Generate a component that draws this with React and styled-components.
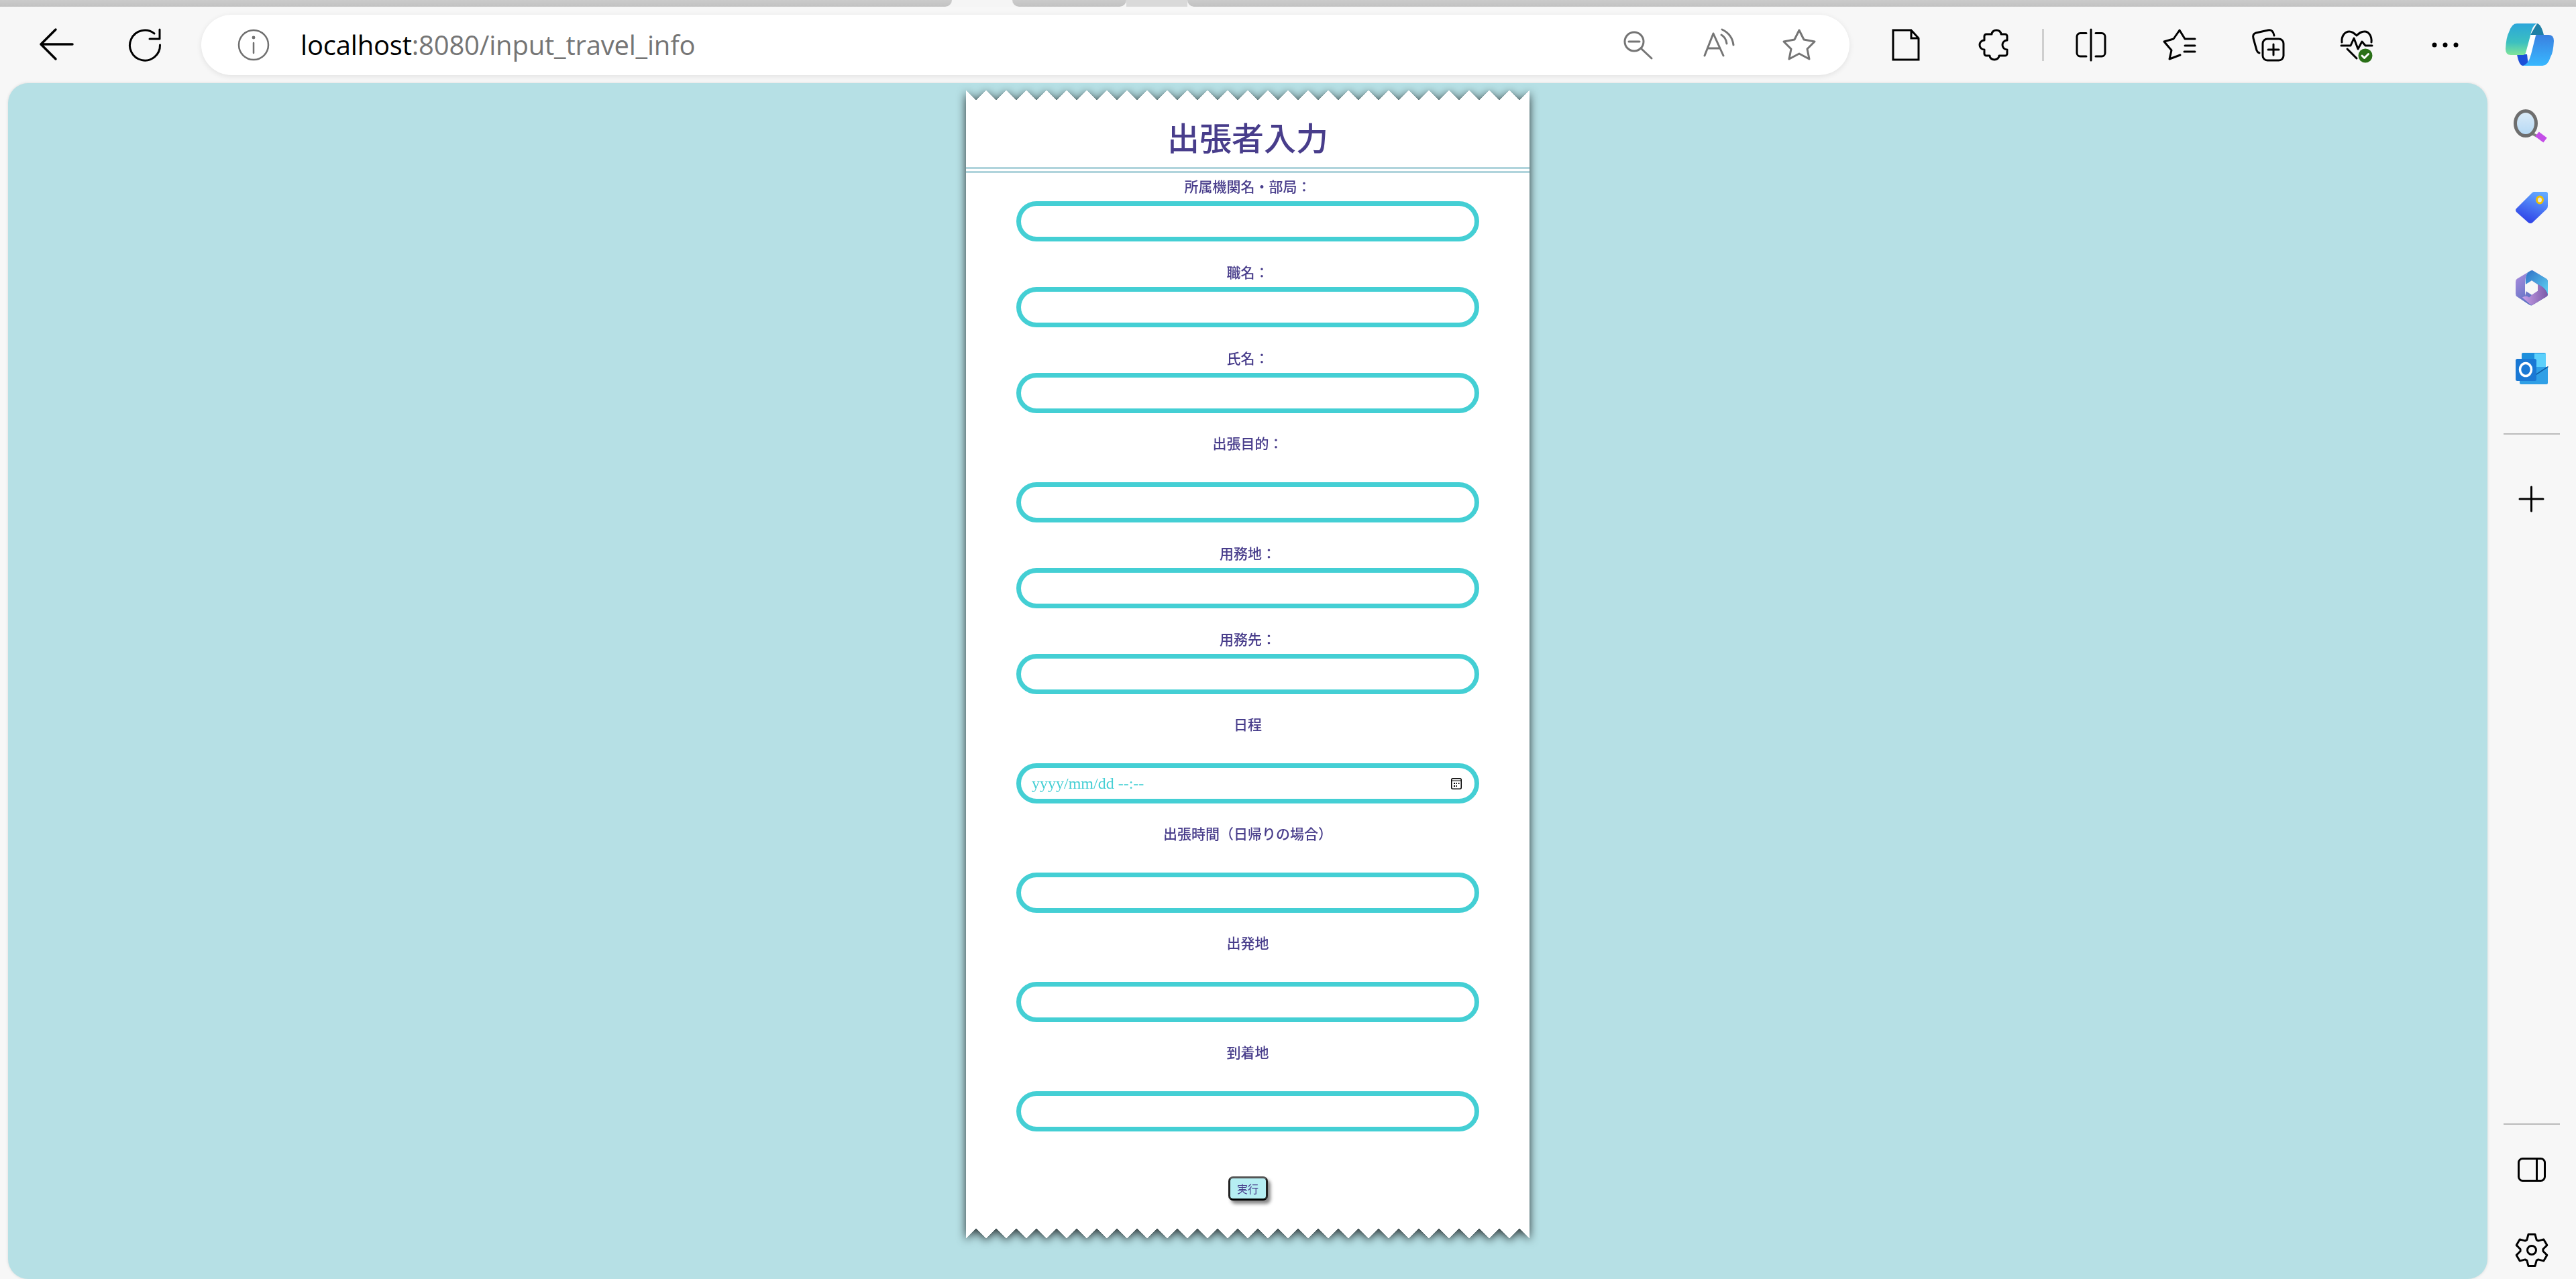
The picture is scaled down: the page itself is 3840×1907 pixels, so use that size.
import React from 'react';
import styled, { createGlobalStyle } from 'styled-components';

const GlobalStyle = createGlobalStyle`
  html, body {
    margin: 0;
    padding: 0;
    background: #f7f7f7;
  }
`;

const Window = styled.div`
  display: flex;
  flex-direction: column;
  width: 3840px;
  height: 1907px;
  overflow: hidden;
  background: #f7f7f7;
`;

// top strip: cropped tabs
const TabStrip = styled.div`
  display: flex;
  flex: none;
  height: 10px;
  background: #f5f5f5;
`;

const TabPiece = styled.div`
  flex: ${props => (props.$w ? `0 0 ${props.$w}px` : '1')};
  margin-right: ${props => props.$mr || 0}px;
  background: ${props => (props.$light ? '#d9d9d9' : 'linear-gradient(#cbcbcb, #c2c2c2)')};
  border-radius: ${props => props.$radius || '0'};
`;

const Toolbar = styled.header`
  display: flex;
  flex: none;
  align-items: center;
  height: 114px;
  padding-left: 18px;
`;

const Slot = styled.div`
  display: flex;
  flex: 0 0 ${props => props.$w || 132}px;
  align-items: center;
  justify-content: center;
`;

const Icon = styled.svg`
  display: block;
  flex: none;
  overflow: visible;
  fill: none;
  stroke: ${props => props.$color || '#000'};
  stroke-width: ${props => props.$sw || 3};
  stroke-linecap: round;
  stroke-linejoin: round;
`;

const AddressBar = styled.div`
  display: flex;
  flex: 0 0 2457px;
  align-items: center;
  height: 90px;
  margin: 0 18px;
  padding: 0 15px 0 54px;
  box-sizing: border-box;
  border-radius: 45px;
  background: #fff;
  box-shadow: 0 2px 8px rgba(0, 0, 0, 0.09);
`;

const Url = styled.div`
  flex: 1;
  margin-left: 46px;
  font-family: 'Open Sans', 'Liberation Sans', sans-serif;
  font-size: 40px;
  line-height: 48px;
  letter-spacing: -0.2px;
  color: #757575;

  b {
    font-weight: 400;
    color: #000;
  }
`;

const ToolDivider = styled.div`
  flex: none;
  width: 3px;
  height: 48px;
  margin: 0 4px 0 5px;
  background: #cfcfcf;
`;

const Body = styled.div`
  display: flex;
  flex: 1;
  min-height: 0;
`;

const Content = styled.main`
  display: flex;
  flex: 0 0 3696px;
  justify-content: center;
  align-items: flex-start;
  margin-left: 12px;
  padding-top: 11px;
  box-sizing: border-box;
  border-radius: 30px;
  overflow: hidden;
  background: #b6e0e5;
  box-shadow: 0 0 4px rgba(0, 0, 0, 0.12);
`;

const Sidebar = styled.aside`
  display: flex;
  flex: 1;
  flex-direction: column;
  align-items: center;
  padding-top: 39px;
`;

const SideSlot = styled.div`
  display: flex;
  flex: none;
  align-items: center;
  justify-content: center;
  width: 48px;
  height: 48px;
  margin-bottom: ${props => props.$mb ?? 72}px;
`;

const SideDivider = styled.div`
  flex: none;
  width: 84px;
  height: 2px;
  background: #bbb;
  margin-bottom: ${props => props.$mb || 72}px;
`;

const Spacer = styled.div`
  flex: 1;
`;

// ticket shaped paper, the shadow follows the teeth
const Paper = styled.div`
  flex: none;
  width: 840px;
  filter: drop-shadow(0 3px 7px rgba(0, 0, 0, 0.78));
`;

const TopTeeth = styled.div`
  height: 14px;
  background: conic-gradient(from -47deg at 50% 100%, transparent 94deg, #fff 0) 0 0 / 30px 14px repeat-x;
`;

const BottomTeeth = styled.div`
  height: 15px;
  background: conic-gradient(from 133deg at 50% 0, transparent 94deg, #fff 0) 0 0 / 30px 15px repeat-x;
`;

const Sheet = styled.div`
  background: #fff;
  padding-bottom: 42px;
`;

const Title = styled.h1`
  margin: 0;
  padding: 30px 0 22px;
  border-bottom: 9px double #b0d4dc;
  font-family: 'Noto Sans CJK JP', sans-serif;
  font-size: 48px;
  line-height: 48px;
  font-weight: 500;
  text-align: center;
  color: #483d8b;
`;

const Form = styled.form`
  display: flex;
  flex-direction: column;
  align-items: center;
`;

const Field = styled.div`
  display: flex;
  flex-direction: column;
  align-items: center;
  width: 690px;
  margin-bottom: 26px;
`;

const Label = styled.label`
  height: ${props => (props.$loose ? 77 : 42)}px;
  font-family: 'Noto Sans CJK JP', sans-serif;
  font-size: 21px;
  font-weight: 500;
  line-height: ${props => (props.$loose ? 37 : 39)}px;
  color: #483d8b;
`;

const InputWrap = styled.div`
  position: relative;
  width: 100%;
`;

const Input = styled.input`
  display: block;
  width: 100%;
  height: 60px;
  padding: 0 14px 0 16px;
  box-sizing: border-box;
  border: 7px solid #44cfd4;
  border-radius: 30px;
  background: #fff;
  outline: none;
  font-family: 'Liberation Serif', serif;
  font-size: 24px;
  color: #44cfd4;

  &::placeholder {
    color: #44cfd4;
    opacity: 1;
  }
`;

const CalendarIcon = styled.svg`
  position: absolute;
  top: 22px;
  right: 26px;
  display: block;
`;

const SubmitButton = styled.button`
  width: 59px;
  height: 36px;
  margin-top: 41px;
  padding: 0;
  box-sizing: border-box;
  border: 3px solid #222;
  border-top-color: #555;
  border-bottom-color: #000;
  border-radius: 7px;
  background: #b6eef2;
  box-shadow: 4px 5px 5px #888;
  font-family: 'Noto Sans CJK JP', sans-serif;
  font-size: 16px;
  line-height: 1;
  color: #483d8b;
`;

const fields = [
  { label: '所属機関名・部局：' },
  { label: '職名：' },
  { label: '氏名：' },
  { label: '出張目的：', loose: true },
  { label: '用務地：' },
  { label: '用務先：' },
  { label: '日程', loose: true, date: true },
  { label: '出張時間（日帰りの場合）', loose: true },
  { label: '出発地', loose: true },
  { label: '到着地', loose: true },
];

// 6 tooth gear outline
const gearPath = Array.from({ length: 6 }, (_, i) => {
  const base = -90 + i * 60;
  return [[-25, 17], [-12, 24], [12, 24], [25, 17]]
    .map(([offset, radius]) => {
      const a = ((base + offset) * Math.PI) / 180;
      return `${(24 + radius * Math.cos(a)).toFixed(1)} ${(24 + radius * Math.sin(a)).toFixed(1)}`;
    })
    .join(' L');
}).join(' L');

const App = () => (
  <Window>
    <GlobalStyle />
    <TabStrip>
      <TabPiece $w={1419} $mr={90} $radius="0 0 16px 0" />
      <TabPiece $w={170} $radius="0 0 16px 16px" />
      <TabPiece $w={91} $light />
      <TabPiece $radius="0 0 0 16px" />
    </TabStrip>

    <Toolbar>
      <Slot>
        <Icon width="48" height="48" viewBox="0 0 48 48" $sw={3.5}>
          <path d="M1 23 L23 1 M1 23 L23 45 M1 23 H48" />
        </Icon>
      </Slot>
      <Slot>
        <Icon width="48" height="48" viewBox="0 0 48 48">
          <path d="M38 7 A22.5 22.5 0 1 0 46.5 24" />
          <path d="M46 1 V15 H31" />
        </Icon>
      </Slot>

      <AddressBar>
        <Icon width="48" height="48" viewBox="0 0 48 48" $color="#707070" $sw={2.5}>
          <circle cx="24" cy="24" r="22" />
          <path d="M24 21 V36" />
          <circle cx="24" cy="13" r="1.2" />
        </Icon>
        <Url>
          <b>localhost</b>:8080/input_travel_info
        </Url>
        <Slot $w={120}>
          <Icon width="48" height="48" viewBox="0 0 48 48" $color="#757575">
            <circle cx="18" cy="19" r="14" />
            <path d="M10 19 H26 M28 29 L44 44" />
          </Icon>
        </Slot>
        <Slot $w={120}>
          <Icon width="48" height="48" viewBox="0 0 48 48" $color="#757575">
            <path d="M3 40 L16 7 L31 40 M8 29 H26" />
            <path d="M28 9 Q35 13 36 22 M29 1 Q44 8 46 24" />
          </Icon>
        </Slot>
        <Slot $w={120}>
          <Icon width="48" height="48" viewBox="0 0 48 48" $color="#757575">
            <path d="M24 2 L31 16 L47 19 L36 30 L39 45 L24 37 L9 45 L12 30 L1 19 L17 16 Z" />
          </Icon>
        </Slot>
      </AddressBar>

      <Slot>
        <Icon width="48" height="48" viewBox="0 0 48 48">
          <path d="M5 2 H32 L43 14 V46 H5 Z M32 2 V14 H43" strokeLinejoin="miter" />
        </Icon>
      </Slot>
      <Slot>
        <Icon width="48" height="48" viewBox="0 0 48 48">
          <path d="M12 8 H20 a7 6 0 0 1 14 0 H40 a3 3 0 0 1 3 3 V17 a7 7 0 0 0 0 14 V37 a3 3 0 0 1 -3 3 H31 a7 6 0 0 1 -14 0 H12 a3 3 0 0 1 -3 -3 V31 a7 7 0 0 1 0 -14 V11 a3 3 0 0 1 3 -3 Z" />
        </Icon>
      </Slot>
      <ToolDivider />
      <Slot>
        <Icon width="48" height="48" viewBox="0 0 48 48">
          <path d="M17 6.5 H8 a5 5 0 0 0 -5 5 V36 a5 5 0 0 0 5 5 H17 M31 6.5 H40 a5 5 0 0 1 5 5 V36 a5 5 0 0 1 -5 5 H31 M24 1 V47" />
        </Icon>
      </Slot>
      <Slot>
        <Icon width="48" height="48" viewBox="0 0 48 48">
          <path d="M25 39 L9 45 L12 32 L1 19 L15 15 L24 2 L32 15 H47 M32 25 H47 M31 34 H47" />
        </Icon>
      </Slot>
      <Slot>
        <Icon width="48" height="48" viewBox="0 0 48 48">
          <path d="M33 10 C32 4 29 1 24 2 L6 6 C2 7 1 10 2 14 L7 32 Q8 35 11 36" />
          <rect x="16" y="15" width="31" height="32" rx="7" />
          <path d="M24 31 H40 M32 23 V39" />
        </Icon>
      </Slot>
      <Slot>
        <Icon width="48" height="48" viewBox="0 0 48 48">
          <path d="M2 20 C1 10 7 4 13 4 C18 4 21 7 24 10 C27 7 30 4 36 4 C42 4 47 11 46 20" />
          <path d="M1 25 H15 L20 14 L26 30 L32 19 L37 25 H47 M10 30 L24 44" />
          <circle cx="37" cy="40" r="10.5" fill="#2a7018" stroke="none" />
          <path d="M32 40 L35.5 43.5 L41.5 37.5" stroke="#fff" />
        </Icon>
      </Slot>
      <Slot>
        <Icon width="48" height="14" viewBox="0 0 48 14">
          <circle cx="8" cy="7" r="3.5" fill="#000" stroke="none" />
          <circle cx="24" cy="7" r="3.5" fill="#000" stroke="none" />
          <circle cx="40" cy="7" r="3.5" fill="#000" stroke="none" />
        </Icon>
      </Slot>
      <Slot $w={120}>
        <Icon width="72" height="64" viewBox="0 0 72 64">
          <defs>
            <linearGradient id="copilotLeft" x1="0" y1="0" x2="0" y2="1">
              <stop offset="0%" stopColor="#2ba6da" />
              <stop offset="60%" stopColor="#3cc0c0" />
              <stop offset="100%" stopColor="#80e49a" />
            </linearGradient>
            <linearGradient id="copilotRight" x1="0" y1="0" x2="0" y2="1">
              <stop offset="0%" stopColor="#3a80e0" />
              <stop offset="100%" stopColor="#38b8ff" />
            </linearGradient>
          </defs>
          <path d="M37 17 H47 L38 47 H28 Z" fill="#fff" stroke="none" />
          <path d="M47 0 Q53 1 57 17 H37 Z" fill="#1f7fa6" stroke="none" />
          <path d="M17 46 H32 L34 63 H26 Q20 63 17 46 Z" fill="#1c50d8" stroke="none" />
          <path d="M17 0 H47 Q40 2 37 18 L30 44 Q29 47 26 47 H8 Q0 47 0 38 Q1 20 5 13 Q9 0 17 0 Z" fill="url(#copilotLeft)" stroke="none" />
          <path d="M45 18 Q44 17 48 17 H64 Q72 17 72 26 Q71 44 67 50 Q63 63 55 63 H26 Q34 61 38 46 Z" fill="url(#copilotRight)" stroke="none" />
        </Icon>
      </Slot>
    </Toolbar>

    <Body>
      <Content>
        <Paper>
          <TopTeeth />
          <Sheet>
            <Title>出張者入力</Title>
            <Form>
              {fields.map(field => (
                <Field key={field.label}>
                  <Label $loose={field.loose}>{field.label}</Label>
                  <InputWrap>
                    <Input type="text" placeholder={field.date ? 'yyyy/mm/dd --:--' : undefined} />
                    {field.date && (
                      <CalendarIcon width="16" height="17" viewBox="0 0 16 17">
                        <rect x="0.75" y="0.75" width="14.5" height="15.5" rx="2" fill="none" stroke="#000" strokeWidth="1.5" />
                        <path d="M1 4 H15" stroke="#000" strokeWidth="1" />
                        <path d="M4 7 h2 v2 h-2 Z M7.5 7 h1.5 v2 h-1.5 Z M11 7 h1.5 v2 h-1.5 Z M4 11 h2 v2 h-2 Z M7.5 11 h1.5 v2 h-1.5 Z" fill="#000" />
                      </CalendarIcon>
                    )}
                  </InputWrap>
                </Field>
              ))}
              <SubmitButton type="button">実行</SubmitButton>
            </Form>
          </Sheet>
          <BottomTeeth />
        </Paper>
      </Content>

      <Sidebar>
        <SideSlot $mb={74}>
          <Icon width="48" height="48" viewBox="0 0 48 48">
            <defs>
              <linearGradient id="lensFill" x1="0" y1="0" x2="0" y2="1">
                <stop offset="0%" stopColor="#dcecf8" />
                <stop offset="100%" stopColor="#b4d8f4" />
              </linearGradient>
            </defs>
            <path d="M26 37 L32 40" stroke="#808080" strokeWidth="4" />
            <path d="M32 37 L44 46" stroke="#c44ee8" strokeWidth="9" strokeLinecap="butt" />
            <ellipse cx="15" cy="21" rx="15.5" ry="18.5" fill="url(#lensFill)" stroke="#6e6e6e" strokeWidth="5" />
          </Icon>
        </SideSlot>
        <SideSlot>
          <Icon width="48" height="48" viewBox="0 0 48 48">
            <defs>
              <linearGradient id="tagFill" x1="0.7" y1="0" x2="0.3" y2="1">
                <stop offset="0%" stopColor="#62a8ff" />
                <stop offset="100%" stopColor="#2d3de6" />
              </linearGradient>
            </defs>
            <path d="M27 1 H45 a3 3 0 0 1 3 3 V22 Q48 25 46 27 L25 47 Q22 49 19 47 L1 31 Q-1 28 1 26 L25 2 Z" fill="url(#tagFill)" stroke="none" />
            <ellipse cx="36" cy="13" rx="4.5" ry="5" fill="#e6e6e6" stroke="#f0c000" strokeWidth="3" />
          </Icon>
        </SideSlot>
        <SideSlot>
          <Icon width="48" height="48" viewBox="0 0 48 48">
            <defs>
              <linearGradient id="officeTop" x1="0" y1="0" x2="1" y2="1">
                <stop offset="0%" stopColor="#2f6fc6" />
                <stop offset="100%" stopColor="#5fd6f4" />
              </linearGradient>
              <linearGradient id="officeLeft" x1="0" y1="0" x2="1" y2="1">
                <stop offset="0%" stopColor="#b48ee0" />
                <stop offset="100%" stopColor="#2c64b4" />
              </linearGradient>
              <linearGradient id="officeBottom" x1="0" y1="0" x2="1" y2="0">
                <stop offset="0%" stopColor="#c8a0e8" />
                <stop offset="100%" stopColor="#7a5aa8" />
              </linearGradient>
            </defs>
            <g transform="translate(0 -4.8) scale(1 1.2)">
              <path d="M24 2 L46 13 Q48 14 48 17 V31 Q48 34 46 35 L24 46 Q22 46 20 45 L2 35 Q0 34 0 31 V17 Q0 14 2 13 L18 5 Q14 10 14 20 V34 Z" fill="url(#officeLeft)" stroke="none" />
              <path d="M18 5 L22 3 Q24 2 26 3 L46 13 Q48 14 48 17 V33 Q46 26 38 22 L32 19 L24 15 L15 20 Q14 10 18 5 Z" fill="url(#officeTop)" stroke="none" />
              <path d="M10 36 Q16 33 20 36 L24 33 L33 28 V20 L38 22 Q46 26 48 33 Q47 34 46 35 L26 45 Q24 46 22 45 Z" fill="url(#officeBottom)" stroke="none" />
              <path d="M24 15 L33 20 V28 L24 33 L15 28 V20 Z" fill="#f7f7f7" stroke="none" />
            </g>
          </Icon>
        </SideSlot>
        <SideSlot $mb={73}>
          <Icon width="48" height="48" viewBox="0 0 48 48">
            <rect x="9" y="1" width="36" height="30" rx="2" fill="#1d8fdc" stroke="none" />
            <rect x="28" y="2" width="17" height="20" fill="#5cd0fb" stroke="none" />
            <rect x="6" y="22" width="42" height="26" rx="2" fill="#2f9fe6" stroke="none" />
            <path d="M28 35 L48 22" stroke="#0f5fa8" strokeWidth="1.5" />
            <rect x="0" y="10" width="31" height="33" rx="2.5" fill="#1a78d4" stroke="none" />
            <ellipse cx="15" cy="26" rx="8.5" ry="9.5" stroke="#fff" strokeWidth="3.5" />
          </Icon>
        </SideSlot>
        <SideDivider />
        <SideSlot $mb={0}>
          <Icon width="48" height="48" viewBox="0 0 48 48">
            <path d="M6 24 H41 M23.5 6 V42" />
          </Icon>
        </SideSlot>
        <Spacer />
        <SideDivider $mb={43} />
        <SideSlot $mb={72}>
          <Icon width="42" height="36" viewBox="0 0 42 36">
            <rect x="1.5" y="1.5" width="39" height="33" rx="6" />
            <path d="M28.5 1.5 V34.5" />
          </Icon>
        </SideSlot>
        <SideSlot $mb={19}>
          <Icon width="48" height="48" viewBox="0 0 48 48">
            <path d={`M${gearPath} Z`} />
            <circle cx="24" cy="24" r="6.5" />
          </Icon>
        </SideSlot>
      </Sidebar>
    </Body>
  </Window>
);

export default App;
